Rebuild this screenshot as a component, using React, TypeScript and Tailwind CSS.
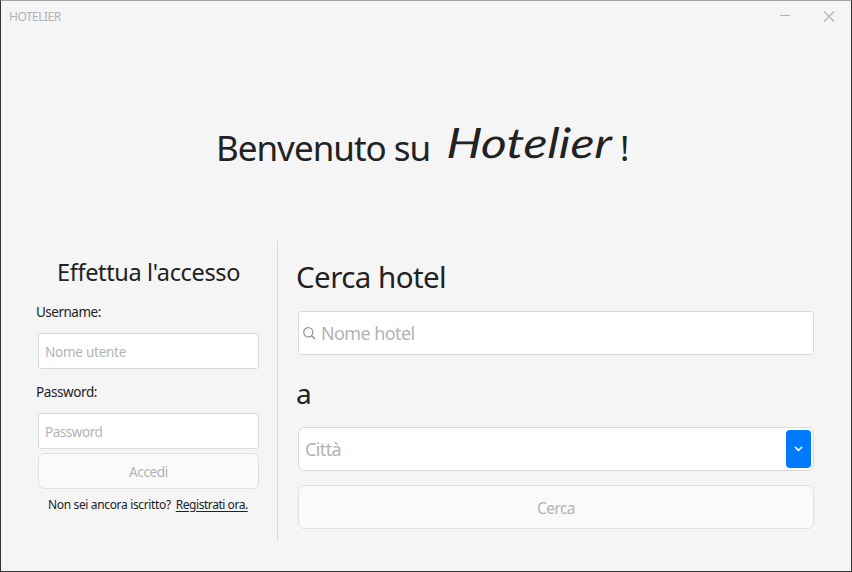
import React from "react";

function TitleBar() {
  return (
    <header className="flex h-[31px] items-center justify-between pl-2 pr-[16px] text-[#b3b3b3]">
      <span className="text-[12px] leading-4 tracking-[-0.5px]">HOTELIER</span>
      <div className="flex items-center gap-[33px]">
        <svg width="11" height="11" viewBox="0 0 11 11" stroke="currentColor" fill="none">
          <path d="M0 4.5H10" />
        </svg>
        <svg width="11" height="11" viewBox="0 0 11 11" stroke="currentColor" fill="none">
          <path d="M0 .5L10 10.5M10 .5L0 10.5" strokeWidth="1.1" />
        </svg>
      </div>
    </header>
  );
}

function Login() {
  return (
    <section className="flex w-[276px] flex-col pl-[35px] pr-[18px] pt-[13px]">
      <h2 className="pl-[21px] text-[23.5px] leading-[36px] whitespace-nowrap tracking-[-0.35px]">Effettua l'accesso</h2>
      <label className="mt-[12px] text-[13.5px] leading-5 tracking-[-0.5px]">Username:</label>
      <input
        placeholder="Nome utente"
        className="mt-[11px] ml-[2px] h-[36px] w-[221px] rounded-[3px] border border-[#dadada] bg-white px-[6px] pt-[2px] text-[13.5px] tracking-[-0.25px] placeholder:text-[#b3b3b3]"
      />
      <label className="mt-[13px] text-[13.5px] leading-5 tracking-[-0.4px]">Password:</label>
      <input
        placeholder="Password"
        className="mt-[11px] ml-[2px] h-[36px] w-[221px] rounded-[3px] border border-[#dadada] bg-white px-[6px] pt-[2px] text-[13.5px] tracking-[-0.45px] placeholder:text-[#b3b3b3]"
      />
      <button className="mt-[4px] ml-[2px] h-[36px] w-[221px] rounded-[6px] border border-[#e1e1e1] bg-[#fafafa] pt-[3px] text-[13.5px] tracking-[-0.35px] text-[#b3b3b3]">
        Accedi
      </button>
      <p className="mt-[7px] flex gap-[5px] pl-[12px] text-[12px] leading-[18px] whitespace-nowrap">
        <span className="tracking-[-0.35px]">Non sei ancora iscritto?</span>
        <a className="tracking-[-0.45px] underline underline-offset-2">Registrati ora.</a>
      </p>
    </section>
  );
}

function Search() {
  return (
    <section className="flex flex-1 flex-col pl-[18px] pr-[37px] pt-[14px]">
      <h2 className="text-[29.5px] leading-[44px] tracking-[-0.55px]">Cerca hotel</h2>
      <div className="mt-[12px] ml-[2px] flex h-[44px] items-center rounded-[3px] border border-[#dadada] bg-white pl-[4px]">
        <svg width="13" height="13" viewBox="0 0 13 13" stroke="#8b9299" fill="none" strokeWidth="1.2">
          <circle cx="5.3" cy="5.3" r="4.6" />
          <path d="M8.6 8.8L12 12" strokeWidth="1.5" />
        </svg>
        <input
          placeholder="Nome hotel"
          className="ml-[5px] flex-1 text-[18px] tracking-[-0.6px] placeholder:text-[#b3b3b3]"
        />
      </div>
      <h2 className="mt-[16px] text-[28px] leading-[44px]">a</h2>
      <div className="mt-[12px] ml-[2px] flex h-[44px] items-center justify-between rounded-[6px] border border-[#dadada] bg-white pl-[6px] pr-[2px]">
        <span className="text-[18px] tracking-[-0.6px] text-[#b3b3b3]">Città</span>
        <button className="flex h-[38px] w-[25px] items-center justify-center rounded-[4px] bg-[#007aff]">
          <svg width="9" height="6" viewBox="0 0 9 6" stroke="white" fill="none" strokeWidth="1.5">
            <path d="M.9 .9L4.5 4.4L8.1 .9" />
          </svg>
        </button>
      </div>
      <button className="mt-[14px] ml-[2px] h-[44px] rounded-[6px] border border-[#e1e1e1] bg-[#fafafa] pt-[4px] text-[15.5px] tracking-[-0.6px] text-[#b3b3b3]">
        Cerca
      </button>
    </section>
  );
}

export default function App() {
  return (
    <div className="flex h-[572px] w-[852px] flex-col overflow-hidden border border-[#333333] border-t-[#a3a3a3] bg-[#f5f5f5] font-['Noto_Sans','Open_Sans',sans-serif] text-[#222222]">
      <TitleBar />
      <h1 className="flex h-[209px] pl-[215px] pt-[86px] text-[35px] leading-[60px] whitespace-nowrap">
        <span className="w-[229px] tracking-[-1px]">Benvenuto su</span>
        <span className="block w-[173px] origin-left -translate-y-[6px] -skew-x-3 scale-x-[1.17] font-['Lato',sans-serif] text-[42px] italic tracking-[0.3px]">
          Hotelier
        </span>
        <span className="pl-[2px]">!</span>
      </h1>
      <main className="flex h-[300px]">
        <Login />
        <div className="w-px bg-[#dadada]" />
        <Search />
      </main>
    </div>
  );
}
